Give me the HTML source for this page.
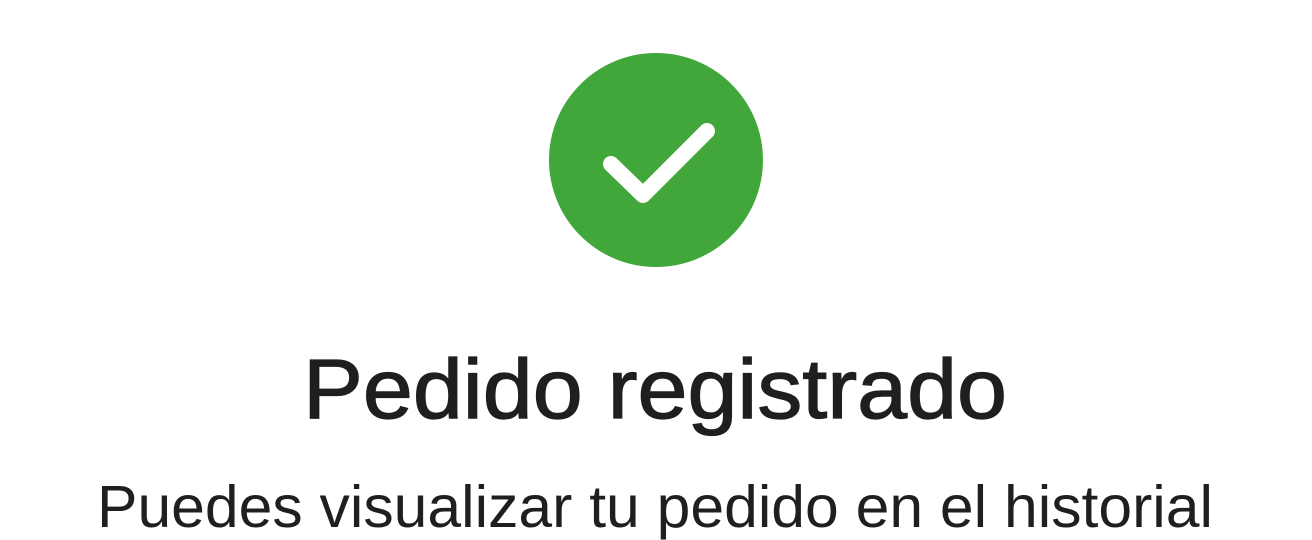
<!DOCTYPE html>
<html><head><meta charset="utf-8"><style>
html,body{margin:0;padding:0;background:#fff;width:1312px;height:540px;overflow:hidden}
svg{display:block}
</style></head><body>
<svg width="1312" height="540" viewBox="0 0 1312 540" xmlns="http://www.w3.org/2000/svg">
<circle cx="656" cy="160" r="107" fill="#42a73b"/>
<path d="M611 164 L643 195 L707 131" fill="none" stroke="#fff" stroke-width="16" stroke-linecap="round" stroke-linejoin="round"/>
<text x="303" y="418" textLength="704" lengthAdjust="spacingAndGlyphs" font-family="Liberation Sans, sans-serif" font-size="84" fill="#1f1f1f" stroke="#1f1f1f" stroke-width="1.2">Pedido registrado</text>
<text x="97" y="527" textLength="1116" lengthAdjust="spacingAndGlyphs" font-family="Liberation Sans, sans-serif" font-size="59" fill="#1f1f1f">Puedes visualizar tu pedido en el historial</text>
</svg>
</body></html>
